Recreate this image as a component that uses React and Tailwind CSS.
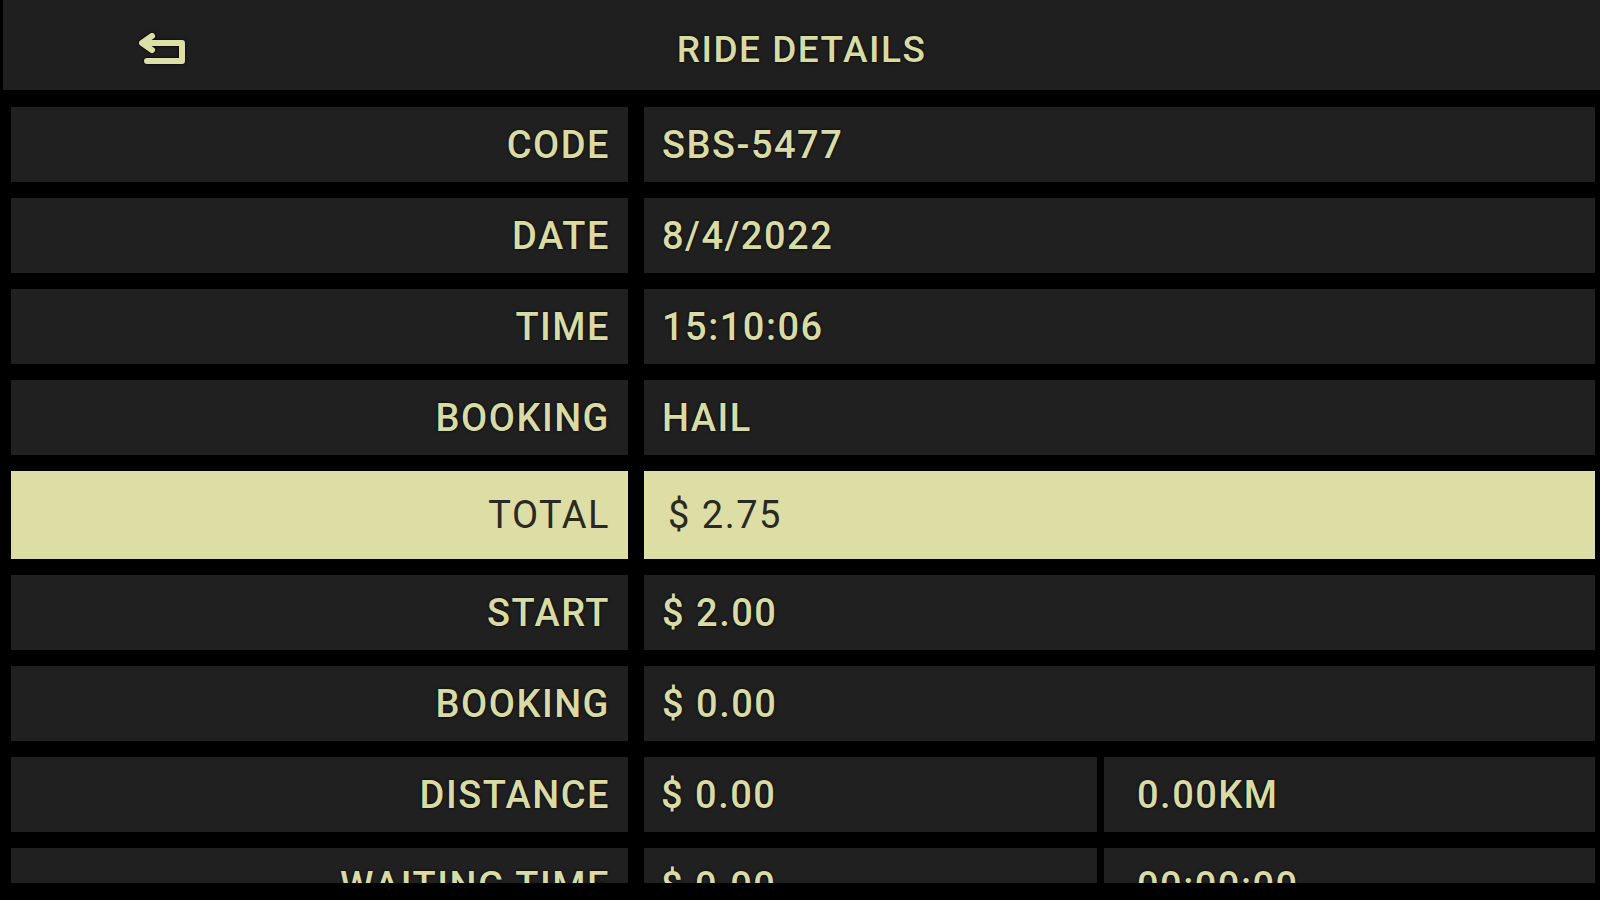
import React from "react";

const rows = [
    { label: "CODE", value: "SBS-5477" },
    { label: "DATE", value: "8/4/2022" },
    { label: "TIME", value: "15:10:06" },
    { label: "BOOKING", value: "HAIL" },
    { label: "TOTAL", value: "$ 2.75", highlight: true },
    { label: "START", value: "$ 2.00" },
    { label: "BOOKING", value: "$ 0.00" },
    { label: "DISTANCE", value: "$ 0.00", extra: "0.00KM" },
    { label: "WAITING TIME", value: "$ 0.00", extra: "00:00:00" },
];

function BackIcon() {
    return (
        <svg width="52" height="36" viewBox="0 0 52 36" className="[filter:drop-shadow(0_0_1.5px_#000)]">
            <path
                d="M14 4 L4 11 L14 18 M6 11 H44 V29 H9"
                fill="none"
                stroke="#dcdfa6"
                strokeWidth="6"
                strokeLinejoin="round"
                strokeLinecap="round"
            />
        </svg>
    );
}

function Row({ row }) {
    const cell = row.highlight ? "bg-[#dcdea6] text-[#2a2a22] font-normal" : "bg-[#202020] text-[#d9dba5] font-medium [text-shadow:0_0_3px_#000]";
    const h = row.highlight ? "h-[88px]" : "h-[75px]";
    return (
        <div className={`grid grid-cols-[617px_951px] gap-x-4 ${h} shrink-0`}>
            <div className={`${cell} flex items-center justify-end pr-[18px]`}>{row.label}</div>
            {row.extra ? (
                <div className="flex gap-[7px]">
                    <div className={`${cell} w-[453px] flex items-center pl-[17px]`}>{row.value}</div>
                    <div className={`${cell} flex-1 flex items-center pl-[33px]`}>{row.extra}</div>
                </div>
            ) : (
                <div className={`${cell} flex items-center ${row.highlight ? "pl-[24px]" : "pl-[18px]"}`}>{row.value}</div>
            )}
        </div>
    );
}

export default function App() {
    return (
        <div className="w-[1600px] h-[900px] bg-black flex flex-col overflow-hidden font-['Roboto','Liberation_Sans',sans-serif] text-[38px] leading-none tracking-[1.5px]">
            {/* Header */}
            <div className="h-[90px] ml-[3px] bg-[#1f1f1f] relative flex items-center justify-center shrink-0">
                <div className="absolute left-[135px] top-[32px]">
                    <BackIcon />
                </div>
                <h1 className="pt-[8px] text-[#d9dba5] font-medium text-[37px] [text-shadow:0_0_3px_#000]">RIDE DETAILS</h1>
            </div>

            {/* Details list */}
            <div className="h-[793px] pt-[17px] pl-[11px] flex flex-col gap-4 overflow-hidden">
                {rows.map((row, i) => (
                    <Row key={i} row={row} />
                ))}
            </div>
        </div>
    );
}
